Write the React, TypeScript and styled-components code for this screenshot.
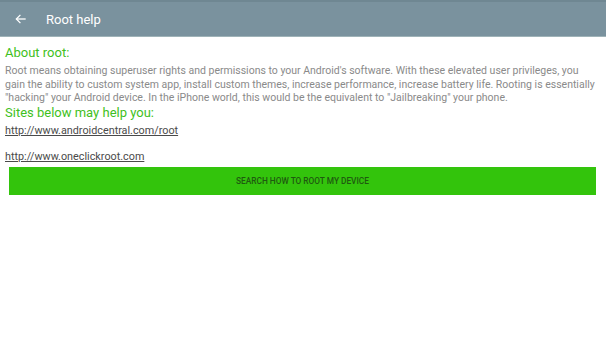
import React from "react";
import styled, { createGlobalStyle } from "styled-components";

const Global = createGlobalStyle`
  html, body { margin: 0; padding: 0; background: #ffffff; }
  body { font-family: Roboto, "Noto Sans", sans-serif; }
`;

const Page = styled.div`
  width: 606px;
  height: 355px;
  background: #ffffff;
  display: flex;
  flex-direction: column;
  overflow: hidden;
`;

const AppBar = styled.header`
  height: 37px;
  background: #7a929e;
  border-top: 2px solid #6f8792;
  box-sizing: border-box;
  display: flex;
  align-items: center;
  padding-left: 14px;
  gap: 18px;
  border-bottom: 1px solid #9fb3b8;
`;

const BackButton = styled.span`
  display: flex;
  align-items: center;
  width: 14px;
  height: 14px;
`;

const Title = styled.h1`
  margin: 0;
  font-size: 13px;
  font-weight: 400;
  color: #ffffff;
`;

const Content = styled.main`
  display: flex;
  flex-direction: column;
  padding: 8px 0 0 5px;
`;

const Heading = styled.h2`
  margin: 0;
  font-size: 13px;
  font-weight: 400;
  line-height: 16px;
  color: #3fbf22;
`;

const Body = styled.p`
  margin: 3px 0 0;
  font-size: 10.5px;
  line-height: 13.5px;
  color: #8a8a8a;
  white-space: nowrap;
`;

const Link = styled.a<{ $gap: number }>`
  display: block;
  align-self: flex-start;
  margin-top: ${(p) => p.$gap}px;
  font-size: 10.8px;
  line-height: 14px;
  color: #4a4a4a;
  text-decoration: underline;
`;

const ActionButton = styled.button`
  margin: 3px 10px 0 4px;
  height: 28px;
  border: none;
  background: #33c40c;
  color: #1f5a10;
  font-family: Roboto, "Noto Sans", sans-serif;
  font-size: 8.3px;
  font-weight: 500;
  text-transform: uppercase;
  cursor: pointer;
`;

export default function App() {
  return (
    <>
      <Global />
      <Page>
        <AppBar>
          <BackButton>
            <svg width="14" height="14" viewBox="0 0 24 24" fill="none" stroke="#ffffff" strokeWidth="2.2">
              <path d="M20 12H4" />
              <path d="M11 5l-7 7 7 7" />
            </svg>
          </BackButton>
          <Title>Root help</Title>
        </AppBar>
        <Content>
          <Heading>About root:</Heading>
          <Body>
            Root means obtaining superuser rights and permissions to your Android's software. With these elevated user privileges, you
            <br />
            gain the ability to custom system app, install custom themes, increase performance, increase battery life. Rooting is essentially
            <br />
            "hacking" your Android device. In the iPhone world, this would be the equivalent to "Jailbreaking" your phone.
          </Body>
          <Heading>Sites below may help you:</Heading>
          <Link $gap={3} href="#">http://www.androidcentral.com/root</Link>
          <Link $gap={12} href="#">http://www.oneclickroot.com</Link>
          <ActionButton>Search how to root my device</ActionButton>
        </Content>
      </Page>
    </>
  );
}
